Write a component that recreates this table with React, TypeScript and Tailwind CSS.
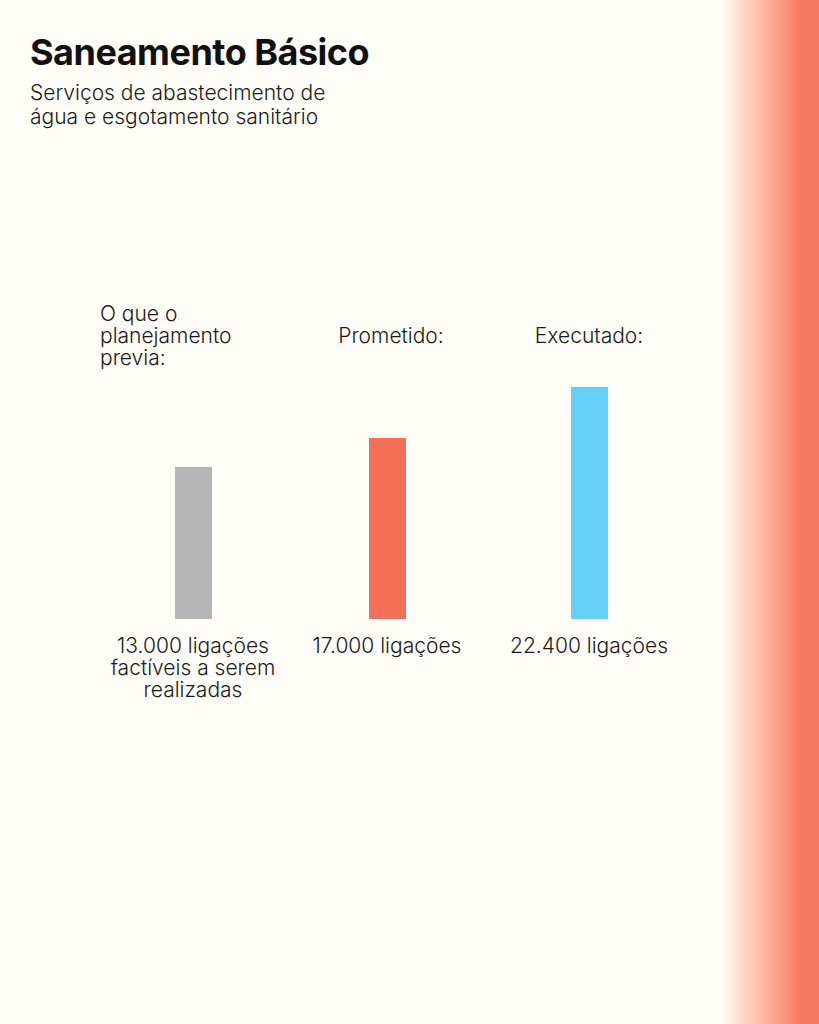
const bars = [
  { color: "bg-[#b5b5b5]", height: 152 },
  { color: "bg-[#f47158]", height: 181 },
  { color: "bg-[#64cff7]", height: 232 },
];

export default function App() {
  return (
    <div className="flex min-h-[1024px] w-[819px] bg-[#fffdf7] font-['Inter',sans-serif] text-[#111]">
      <main className="flex-1 pl-[30px] pt-[32px]">
        <h1 className="text-[36px] font-bold leading-[40px] tracking-[-0.5px]">
          Saneamento Básico
        </h1>
        <p className="mt-[9px] text-[21px] font-light leading-[24px] text-[#1a1a1a]">
          Serviços de abastecimento de
          <br />
          água e esgotamento sanitário
        </p>

        <div className="ml-[66px] mt-[174px] grid grid-cols-[194px_194px_210px] text-[21px] font-light leading-[22px] text-[#1a1a1a]">
          <div className="pl-[4px] text-left">
            O que o<br />
            planejamento
            <br />
            previa:
          </div>
          <div className="self-center pl-[8px] text-center">Prometido:</div>
          <div className="self-center text-center">Executado:</div>

          {bars.map((bar, i) => (
            <div key={i} className="mt-[18px] flex h-[232px] items-end justify-center">
              <div className={`w-[37px] ${bar.color}`} style={{ height: bar.height }} />
            </div>
          ))}

          <div className="mt-[16px] text-center">
            13.000 ligações
            <br />
            factíveis a serem
            <br />
            realizadas
          </div>
          <div className="mt-[16px] text-center">17.000 ligações</div>
          <div className="mt-[16px] text-center">22.400 ligações</div>
        </div>
      </main>
      <aside className="w-[99px] bg-linear-to-r from-[#fffdf7] to-[#f47b60] to-80%" />
    </div>
  );
}
